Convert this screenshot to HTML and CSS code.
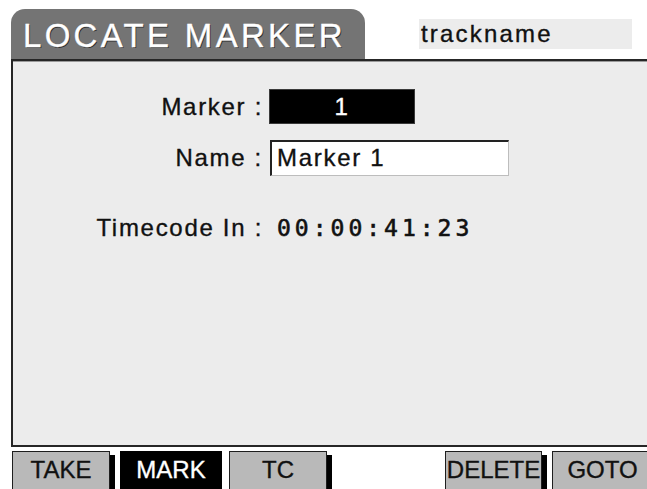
FILE: index.html
```html
<!DOCTYPE html>
<html lang="en">
<head>
<meta charset="utf-8">
<title>Locate Marker</title>
<link rel="stylesheet" href="styles.css">
</head>
<body>
<div class="screen">
  <header class="header">
    <div class="tab">LOCATE MARKER</div>
    <div class="track">trackname</div>
  </header>

  <main class="panel">
    <div class="row row-marker">
      <span class="label">Marker :</span>
      <span class="marker-box">1</span>
    </div>
    <div class="row row-name">
      <span class="label">Name :</span>
      <span class="name-field">Marker 1</span>
    </div>
    <div class="row row-tc">
      <span class="label">Timecode In :</span>
      <span class="tc-value">00:00:41:23</span>
    </div>
  </main>

  <nav class="softkeys">
    <button class="key key-take">TAKE</button>
    <button class="key key-mark is-active">MARK</button>
    <button class="key key-tc">TC</button>
    <button class="key key-delete">DELETE</button>
    <button class="key key-goto">GOTO</button>
  </nav>
</div>
</body>
</html>
```

FILE: styles.css
```css
html, body {
  margin: 0;
  padding: 0;
  background: #ffffff;
}

.screen {
  width: 647px;
  height: 489px;
  overflow: hidden;
  font-family: "Liberation Sans", Arial, sans-serif;
  color: #111111;
  -webkit-text-stroke: 0.35px currentColor;
}

/* ---- title row ---- */
.header {
  display: flex;
  align-items: flex-start;
  height: 59px;
}

.tab {
  margin: 9px 0 0 11px;
  width: 342px;
  height: 42px;
  padding: 8px 0 0 12px;
  background: #747474;
  border-radius: 14px 14px 0 0;
  color: #ffffff;
  font-size: 33px;
  line-height: 37px;
  letter-spacing: 3.3px;
  text-shadow: 1px 1px 0 #2e2e2e;
  white-space: nowrap;
}

.track {
  margin: 19px 0 0 54px;
  width: 211px;
  height: 30px;
  padding-left: 2px;
  background: #ececec;
  font-size: 24px;
  line-height: 30px;
  letter-spacing: 2.2px;
}

/* ---- main panel ---- */
.panel {
  margin-left: 11px;
  width: 660px;
  height: 356px;
  padding-top: 28px;
  background: #ececec;
  border-top: 2px solid #262626;
  border-left: 2px solid #262626;
  border-bottom: 2px solid #262626;
  box-shadow: inset 0 1px 0 #9a9a9a;
}

.row {
  display: flex;
  align-items: center;
  font-size: 24px;
  letter-spacing: 1.7px;
}

.label {
  width: 250px;
  text-align: right;
  white-space: nowrap;
}

.marker-box {
  margin-left: 6px;
  width: 144px;
  height: 33px;
  background: #000000;
  border: 1px solid #3a3a3a;
  color: #ffffff;
  text-align: center;
  line-height: 33px;
}

.row-name {
  margin-top: 16px;
}

.name-field {
  margin-left: 7px;
  width: 231px;
  height: 33px;
  padding-left: 5px;
  background: #ffffff;
  border-top: 2px solid #222222;
  border-left: 2px solid #222222;
  border-right: 1px solid #bdbdbd;
  border-bottom: 1px solid #bdbdbd;
  line-height: 32px;
}

.row-tc {
  margin-top: 37px;
  align-items: baseline;
  line-height: 30px;
}

.tc-value {
  margin-left: 14px;
  font-family: "DejaVu Sans Mono", "Liberation Mono", monospace;
  font-size: 23px;
  letter-spacing: 4px;
  -webkit-text-stroke: 0.6px currentColor;
}

/* ---- soft keys ---- */
.softkeys {
  display: flex;
  margin-top: 4px;
  padding-left: 12px;
}

.key {
  flex: none;
  display: block;
  height: 42px;
  margin: 0;
  padding: 0 0 5px 0;
  background: #b9b9b9;
  border: 1px solid #1e1e1e;
  border-bottom: none;
  border-radius: 0;
  box-shadow: 5px 4px 0 #000000;
  color: #111111;
  font-family: "Liberation Sans", Arial, sans-serif;
  font-size: 24px;
  line-height: 36px;
  text-align: center;
  white-space: nowrap;
  overflow: visible;
  -webkit-text-stroke: 0.35px currentColor;
}

.key-take   { width: 98px; }
.key-mark   { width: 102px; margin-left: 10px; box-shadow: none; }
.key-tc     { width: 98px; margin-left: 7px; }
.key-delete { width: 97px; margin-left: 118px; }
.key-goto   { width: 101px; margin-left: 10px; box-shadow: none; }

.key.is-active {
  background: #000000;
  border-color: #000000;
  color: #ffffff;
}
```
